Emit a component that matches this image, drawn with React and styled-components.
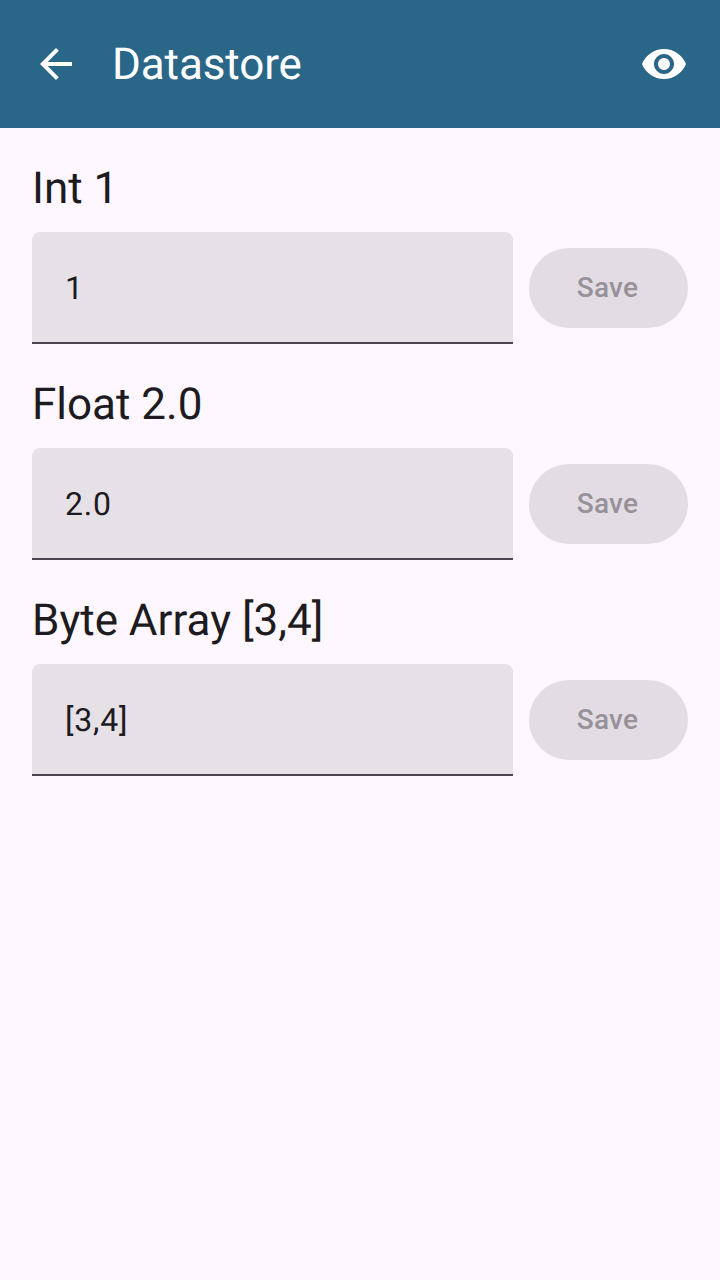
import React from "react";
import styled, { createGlobalStyle } from "styled-components";

const GlobalStyle = createGlobalStyle`
  * { box-sizing: border-box; }
  body { margin: 0; background: #fef7ff; }
`;

const Screen = styled.div`
  min-height: 1280px;
  background: #fef7ff;
  color: #1d1b20;
  font-family: Roboto, "Liberation Sans", sans-serif;
  text-rendering: geometricPrecision;
`;

const TopBar = styled.header`
  display: flex;
  align-items: center;
  height: 128px;
  padding: 0 32px;
  background: #2a6688;
  color: #fff;
`;

const BarIcon = styled.svg`
  display: block;
  width: 48px;
  height: 48px;
  fill: currentColor;
`;

const BarTitle = styled.h1`
  flex: 1;
  margin: 0 0 0 32px;
  font-size: 44px;
  line-height: 56px;
  font-weight: 400;
  letter-spacing: -0.1px;
`;

const Content = styled.main`
  display: flex;
  flex-direction: column;
  gap: 32px;
  padding: 32px;
`;

const Section = styled.section`
  display: flex;
  flex-direction: column;
  gap: 16px;
`;

const Label = styled.h2`
  margin: 0;
  font-size: 44px;
  line-height: 56px;
  font-weight: 400;
`;

const Row = styled.div`
  display: flex;
  align-items: center;
  gap: 16px;
`;

const Field = styled.div`
  flex: 1;
  display: flex;
  align-items: center;
  height: 112px;
  padding: 2px 32px 0 33px;
  background: #e6e0e7;
  border-bottom: 2px solid #49454f;
  border-radius: 8px 8px 0 0;
  font-size: 32px;
  line-height: 38px;
  letter-spacing: 0.8px;
`;

const SaveButton = styled.button`
  width: 159px;
  height: 80px;
  padding: 0 2px 0 0;
  border: 0;
  border-radius: 40px;
  background: #e3dce3;
  color: #979199;
  font: 500 28px/40px Roboto, "Liberation Sans", sans-serif;
  letter-spacing: 0.2px;
`;

const entries = [
  { label: "Int 1", value: "1" },
  { label: "Float 2.0", value: "2.0" },
  { label: "Byte Array [3,4]", value: "[3,4]" },
];

export default function App() {
  return (
    <Screen>
      <GlobalStyle />
      <TopBar>
        <BarIcon viewBox="0 0 24 24">
          <path d="M20 11H7.83l5.59-5.59L12 4l-8 8 8 8 1.41-1.41L7.83 13H20v-2z" />
        </BarIcon>
        <BarTitle>Datastore</BarTitle>
        <BarIcon viewBox="0 0 24 24">
          <path d="M12 4.5C7 4.5 2.73 7.61 1 12c1.73 4.39 6 7.5 11 7.5s9.27-3.11 11-7.5c-1.73-4.39-6-7.5-11-7.5zM12 17c-2.76 0-5-2.24-5-5s2.24-5 5-5 5 2.24 5 5-2.24 5-5 5zm0-8c-1.66 0-3 1.34-3 3s1.34 3 3 3 3-1.34 3-3-1.34-3-3-3z" />
        </BarIcon>
      </TopBar>
      <Content>
        {entries.map(({ label, value }) => (
          <Section key={label}>
            <Label>{label}</Label>
            <Row>
              <Field>{value}</Field>
              <SaveButton disabled>Save</SaveButton>
            </Row>
          </Section>
        ))}
      </Content>
    </Screen>
  );
}
